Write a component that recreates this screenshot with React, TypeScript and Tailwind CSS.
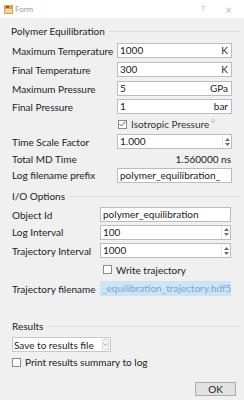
import type { ReactNode } from 'react'

function Spin() {
  return (
    <div className="flex h-full w-[9px] flex-col items-center justify-center gap-[2px] border-l border-[#e6e6e6]">
      <svg width="5" height="3" viewBox="0 0 5 3"><path d="M0 3 L2.5 0 L5 3 Z" fill="#6d6d6d" /></svg>
      <svg width="5" height="3" viewBox="0 0 5 3"><path d="M0 0 L2.5 3 L5 0 Z" fill="#6d6d6d" /></svg>
    </div>
  )
}

function Field({ value, unit, spin, w }: { value: string; unit?: string; spin?: boolean; w: string }) {
  return (
    <div className={`flex h-[15px] items-center overflow-hidden border border-[#bcbcbc] bg-white pl-[2px] ${w} ${spin ? 'pr-0' : 'pr-[3px]'}`}>
      <span className="flex-1 whitespace-nowrap leading-[13px]">{value}</span>
      {unit && <span className="leading-[13px]">{unit}</span>}
      {spin && <Spin />}
    </div>
  )
}

function Row({ h, label, labelW, children }: { h: string; label?: string; labelW: string; children: ReactNode }) {
  return (
    <div className={`flex items-center ${h}`}>
      <div className={`${labelW} shrink-0 whitespace-nowrap leading-none`}>{label}</div>
      {children}
    </div>
  )
}

function Check({ checked }: { checked?: boolean }) {
  return (
    <span className="mr-[4px] flex h-[9px] w-[9px] items-center justify-center border border-[#8a8a8a] bg-white">
      {checked && (
        <svg width="7" height="6" viewBox="0 0 7 6"><path d="M0.5 3 L2.5 5 L6.5 0.5" stroke="#555" strokeWidth="0.9" fill="none" /></svg>
      )}
    </span>
  )
}

function GroupTitle({ title, mt }: { title: string; mt: string }) {
  return (
    <div className={`flex h-[14px] items-center ${mt}`}>
      <span className="whitespace-nowrap leading-none">{title}</span>
      <div className="ml-[4px] h-px flex-1 bg-[#dcdcdc]" />
    </div>
  )
}

export default function App() {
  return (
    <div className="h-[400px] w-[244px] overflow-hidden bg-[#f0f0f0] font-['Lato',sans-serif] text-[10px] text-[#222]">
      {/* Title bar */}
      <div className="flex h-[18px] items-center bg-white pl-[4px] pr-[12px]">
        <svg width="9" height="9" viewBox="0 0 9 9" className="mr-[2px]">
          <rect x="0" y="0" width="9" height="9" fill="#d9a45a" />
          <rect x="1" y="4" width="7" height="4" fill="#f3d7a2" />
          <rect x="2" y="1" width="3" height="2" fill="#8c5a2b" />
        </svg>
        <span className="text-[8px] leading-none text-[#9a9a9a]">Form</span>
        <span className="ml-auto text-[8px] leading-none text-[#b0b0b0]">?</span>
        <span className="ml-[21px] text-[11px] leading-none text-[#b8b8b8]">×</span>
      </div>

      <div className="pl-[12px] pr-[4px]">
        <div className="-ml-[1px]">
          <GroupTitle title="Polymer Equilibration" mt="mt-[6px]" />
        </div>
        <div className="mt-[3px] pr-[8px]">
          <Row h="h-[19px]" label="Maximum Temperature" labelW="w-[105px]"><Field value="1000" unit="K" w="w-[115px]" /></Row>
          <Row h="h-[19px]" label="Final Temperature" labelW="w-[105px]"><Field value="300" unit="K" w="w-[115px]" /></Row>
          <Row h="h-[19px]" label="Maximum Pressure" labelW="w-[105px]"><Field value="5" unit="GPa" w="w-[115px]" /></Row>
          <Row h="h-[17px]" label="Final Pressure" labelW="w-[105px]"><Field value="1" unit="bar" w="w-[115px]" /></Row>
          <Row h="h-[18px]" labelW="w-[106px]">
            <Check checked />
            <span className="leading-none text-[#333]">Isotropic Pressure</span>
            <span className="mb-[6px] ml-[2px] h-[4px] w-[4px] rounded-full border border-[#c4c4c4]" />
          </Row>
          <Row h="h-[17px]" label="Time Scale Factor" labelW="w-[105px]"><Field value="1.000" spin w="w-[115px]" /></Row>
          <Row h="h-[17px]" label="Total MD Time" labelW="w-[105px]">
            <span className="w-[115px] pr-[1px] text-right leading-none">1.560000 ns</span>
          </Row>
          <Row h="h-[16px]" label="Log filename prefix" labelW="w-[105px]"><Field value="polymer_equilibration_" w="w-[115px]" /></Row>
        </div>

        <GroupTitle title="I/O Options" mt="mt-[6px]" />
        <div className="mt-[3px] pr-[9px]">
          <Row h="h-[17px]" label="Object Id" labelW="w-[88px]"><Field value="polymer_equilibration" w="w-[131px]" /></Row>
          <Row h="h-[18px]" label="Log Interval" labelW="w-[88px]"><Field value="100" spin w="w-[131px]" /></Row>
          <Row h="h-[19px]" label="Trajectory Interval" labelW="w-[88px]"><Field value="1000" spin w="w-[131px]" /></Row>
          <Row h="h-[19px]" labelW="w-[91px]">
            <Check />
            <span className="leading-none">Write trajectory</span>
          </Row>
          <Row h="h-[19px]" label="Trajectory filename" labelW="w-[88px]">
            <div className="flex h-[15px] w-[131px] items-center overflow-hidden bg-[#cce4f7] pl-[2px]">
              <span className="whitespace-nowrap leading-[13px] text-[#7aa6cf]">_equilibration_trajectory.hdf5</span>
            </div>
          </Row>
        </div>

        <GroupTitle title="Results" mt="mt-[21px]" />
        <div className="mt-[4px] flex h-[15px] w-[99px] items-center border border-[#c8c8c8] bg-white pl-[1px]">
          <span className="flex-1 whitespace-nowrap leading-none">Save to results file</span>
          <div className="mr-[1px] flex h-[11px] w-[7px] items-center justify-center border border-[#dcdcdc] bg-[#f2f2f2]">
            <svg width="5" height="3" viewBox="0 0 5 3"><path d="M0.5 0.5 L2.5 2.5 L4.5 0.5" stroke="#a0a0a0" strokeWidth="0.8" fill="none" /></svg>
          </div>
        </div>
        <div className="mt-[3px] flex h-[14px] items-center">
          <Check />
          <span className="leading-none">Print results summary to log</span>
        </div>
        <div className="mt-[13px] flex justify-end pr-[4px]">
          <button className="flex h-[14px] w-[41px] items-center justify-center border border-[#adadad] bg-[#e1e1e1] text-[10px] leading-none text-[#222]">OK</button>
        </div>
      </div>
    </div>
  )
}
